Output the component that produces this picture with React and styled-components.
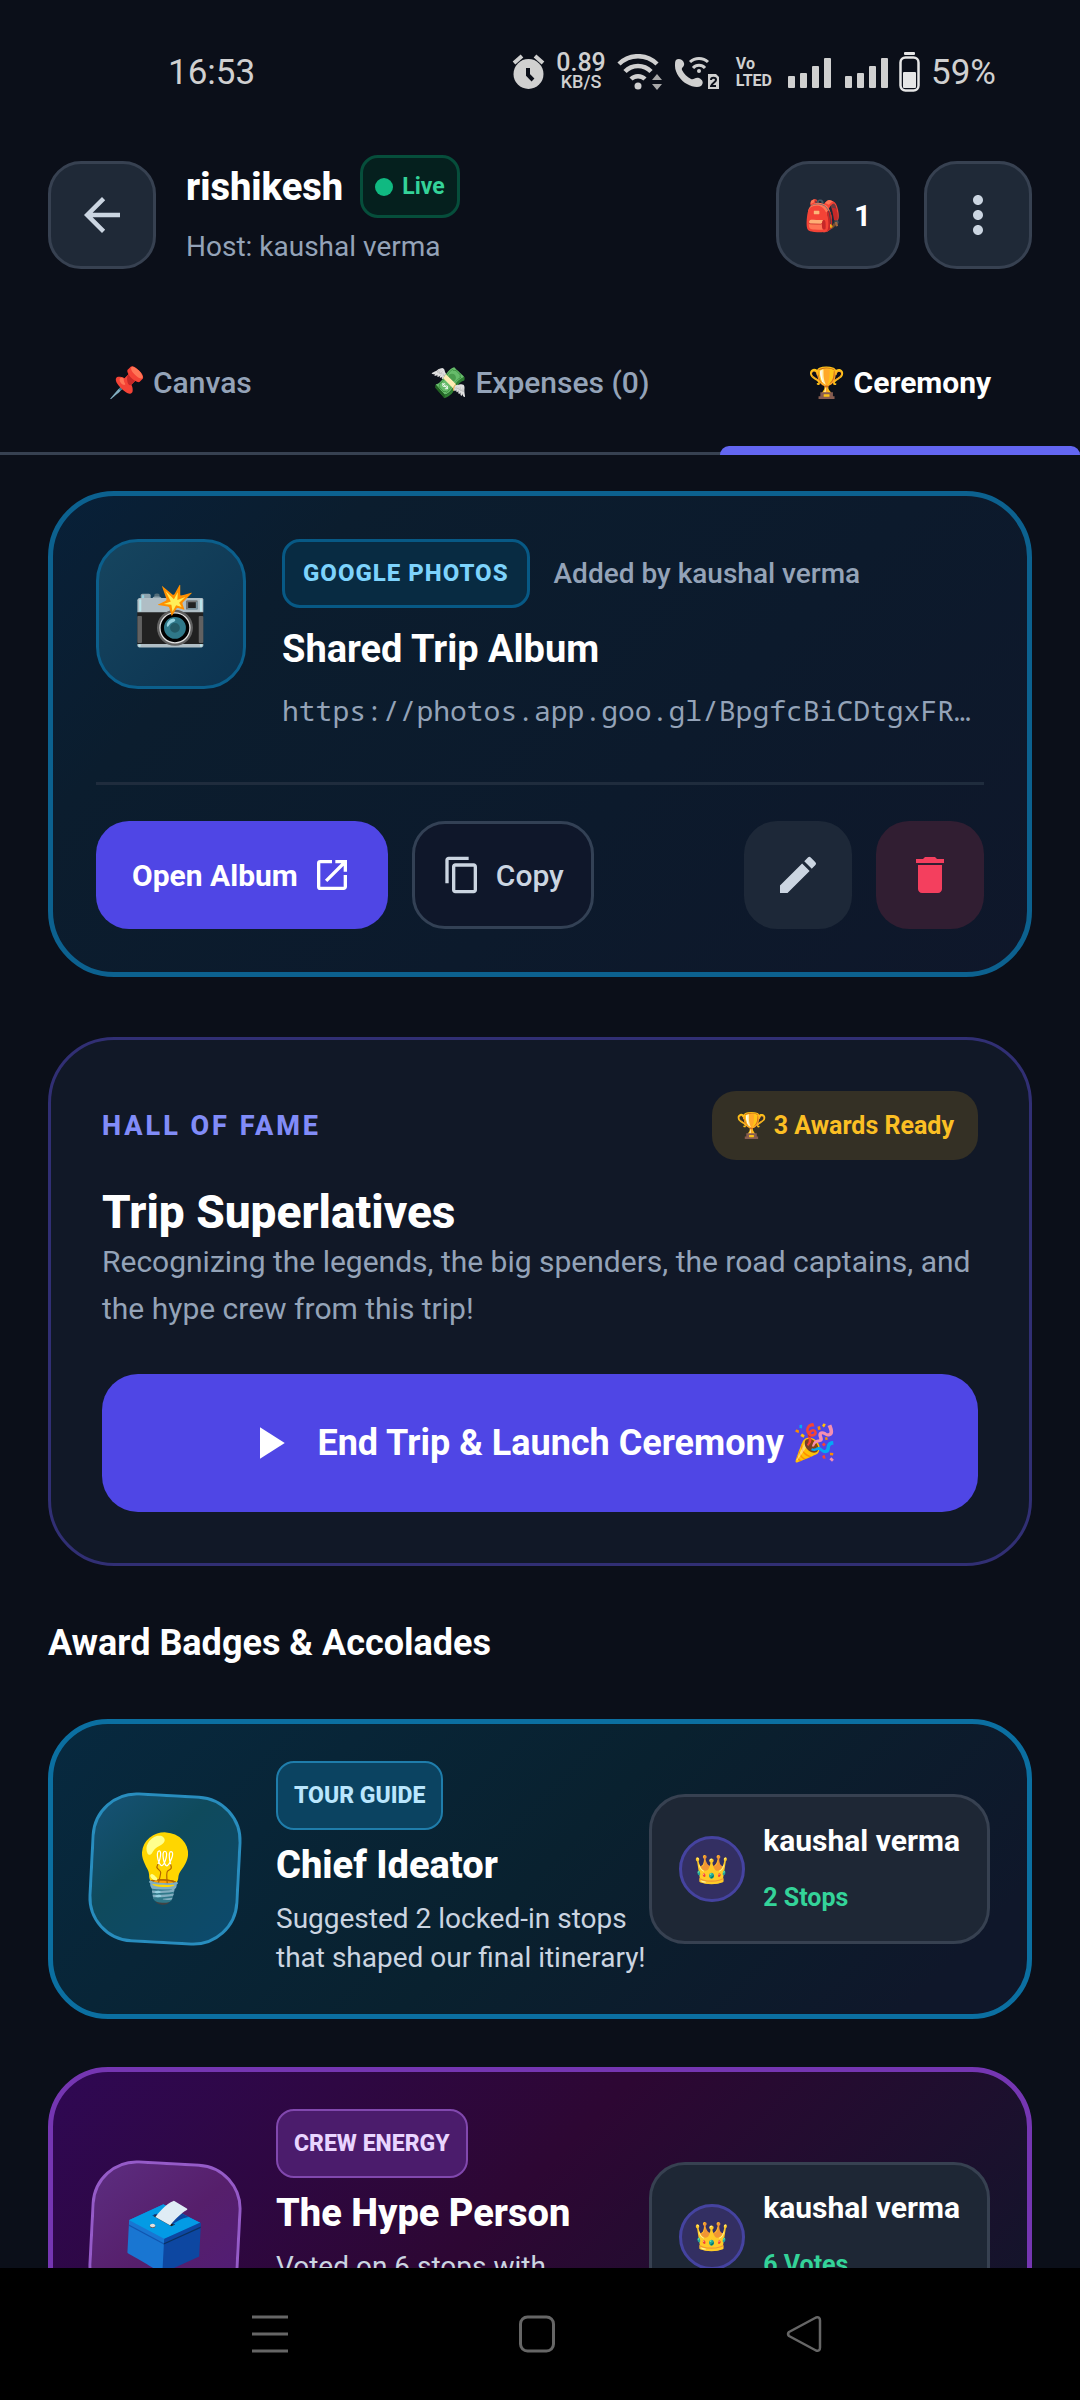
import React from 'react'
import styled, { createGlobalStyle, css } from 'styled-components'
import {
  MdArrowBack,
  MdContentCopy,
  MdDelete,
  MdEdit,
  MdMoreVert,
  MdOpenInNew,
  MdPlayArrow,
} from 'react-icons/md'

const COLORS = {
  BG: '#0b0f19',
  SURFACE: '#1f2937',
  BORDER: '#374151',
  MUTED: '#94a3b8',
  LIGHT: '#cbd5e1',
  PRIMARY: '#4f46e5',
  STATUS: '#d0d0d0',
  NAV: '#666666',
}

const GlobalStyle = createGlobalStyle`
  * {
    box-sizing: border-box;
  }
  body {
    margin: 0;
    background: ${COLORS.BG};
    font-family: Roboto, 'Noto Color Emoji', sans-serif;
    color: white;
  }
  button {
    font: inherit;
    color: inherit;
    border: 0;
    padding: 0;
    background: none;
  }
  h1, h2, h3, p {
    margin: 0;
  }
  svg {
    display: block;
    flex: none;
  }
`

const Screen = styled.div`
  display: flex;
  flex-direction: column;
  height: 100vh;
`

/* status bar */

const StatusBar = styled.div`
  display: flex;
  align-items: center;
  justify-content: space-between;
  flex: none;
  height: 144px;
  padding: 0 84px 0 168px;
  color: ${COLORS.STATUS};
  font-size: 35px;
`
const StatusIcons = styled.div`
  display: flex;
  align-items: center;
  gap: 11px;
`
const Speed = styled.div`
  display: flex;
  flex-direction: column;
  align-items: center;
  font-size: 25px;
  font-weight: 500;
  line-height: 20px;
`
const SpeedUnit = styled.span`
  font-size: 18px;
  line-height: 18px;
`
const VoLte = styled.div`
  display: flex;
  flex-direction: column;
  margin: 0 5px;
  font-size: 16px;
  font-weight: 700;
  line-height: 17px;
`
const Signals = styled.div`
  display: flex;
  gap: 14px;
`

/* header */

const Header = styled.header`
  display: flex;
  align-items: center;
  flex: none;
  padding: 11px 48px 34px;
`
const SquareButton = styled.button`
  display: flex;
  align-items: center;
  justify-content: center;
  gap: 12px;
  width: ${({ $wide }) => ($wide ? 124 : 108)}px;
  height: 108px;
  border: 3px solid ${COLORS.BORDER};
  border-radius: 33px;
  background: ${COLORS.SURFACE};
  color: ${({ $wide }) => ($wide ? 'white' : COLORS.LIGHT)};
  font-size: 30px;
  font-weight: 700;
`
const HeaderText = styled.div`
  flex: 1;
  padding: 0 0 9px 30px;
`
const HeaderActions = styled.div`
  display: flex;
  gap: 24px;
`
const TripRow = styled.div`
  display: flex;
  align-items: center;
  gap: 17px;
  height: 63px;
  margin-bottom: 9px;
`
const TripName = styled.h1`
  font-size: 38px;
  font-weight: 800;
`
const LiveBadge = styled.div`
  display: flex;
  align-items: center;
  gap: 9px;
  height: 63px;
  padding: 0 12px;
  border: 3px solid #064e3b;
  border-radius: 18px;
  background: #05201e;
  color: #34d399;
  font-size: 23px;
  font-weight: 700;
`
const LiveDot = styled.span`
  width: 18px;
  height: 18px;
  border-radius: 50%;
  background: #10b981;
`
const Host = styled.div`
  color: ${COLORS.MUTED};
  font-size: 28px;
  line-height: 39px;
`

/* tabs */

const Tabs = styled.nav`
  display: flex;
  flex: none;
`
const Tab = styled.button`
  position: relative;
  flex: 1;
  height: 146px;
  padding-top: 4px;
  border-bottom: 3px solid ${COLORS.BORDER};
  color: ${COLORS.MUTED};
  font-size: 30px;
  font-weight: 500;

  ${({ $active }) =>
    $active &&
    css`
      color: white;
      font-weight: 700;

      &::after {
        content: '';
        position: absolute;
        left: 0;
        right: 0;
        bottom: -3px;
        height: 9px;
        border-radius: 9px 9px 0 0;
        background: #6366f1;
      }
    `}
`

/* content */

const Content = styled.main`
  flex: 1;
  min-height: 0;
  overflow: hidden;
  padding: 36px 48px 0;
`

const AlbumCard = styled.section`
  padding: 43px;
  margin-bottom: 60px;
  border: 5px solid #0c618f;
  border-radius: 66px;
  background: linear-gradient(135deg, #082038 0%, #0b1d2e 22%, #0c1a2c 60%, #0f172a 100%);
`
const AlbumTop = styled.div`
  display: flex;
  gap: 36px;
  padding-bottom: 54px;
  border-bottom: 3px solid #1f2c3d;
`
const AlbumIcon = styled.div`
  display: flex;
  align-items: center;
  justify-content: center;
  flex: none;
  width: 150px;
  height: 150px;
  border: 3px solid #0b5f8c;
  border-radius: 42px;
  background: linear-gradient(135deg, #16455f, #0c3350);
  font-size: 60px;
`
const AlbumInfo = styled.div`
  flex: 1;
  min-width: 0;
`
const AlbumMeta = styled.div`
  display: flex;
  align-items: center;
  gap: 24px;
  margin-bottom: 17px;
  color: ${COLORS.MUTED};
  font-size: 28px;
  font-weight: 500;
`
const SourceChip = styled.span`
  height: 69px;
  padding: 0 18px;
  border: 3px solid #075985;
  border-radius: 18px;
  background: #082b42;
  color: #7dd3fc;
  font-size: 24px;
  font-weight: 800;
  line-height: 63px;
  letter-spacing: 1px;
`
const AlbumTitle = styled.h2`
  margin-bottom: 19px;
  font-size: 38px;
  font-weight: 700;
  line-height: 48px;
`
const AlbumUrl = styled.div`
  overflow: hidden;
  color: ${COLORS.MUTED};
  font-family: 'Noto Sans Mono', 'DejaVu Sans Mono', monospace;
  font-size: 28px;
  line-height: 36px;
  white-space: nowrap;
  text-overflow: ellipsis;
`
const AlbumActions = styled.div`
  display: flex;
  gap: 24px;
  padding-top: 36px;
`
const ActionButton = styled.button`
  display: flex;
  align-items: center;
  justify-content: center;
  gap: 14px;
  height: 108px;
  padding: 0 ${({ $outlined }) => ($outlined ? 27 : 36)}px;
  border: ${({ $outlined }) => ($outlined ? '3px solid #334155' : 0)};
  border-radius: 33px;
  background: ${({ $outlined }) => ($outlined ? '#0f172a' : COLORS.PRIMARY)};
  color: ${({ $outlined }) => ($outlined ? COLORS.LIGHT : 'white')};
  font-size: 30px;
  font-weight: ${({ $outlined }) => ($outlined ? 500 : 700)};
`
const IconButton = styled.button`
  display: flex;
  align-items: center;
  justify-content: center;
  width: 108px;
  height: 108px;
  border-radius: 33px;
  background: ${({ $danger }) => ($danger ? '#311e32' : '#1d2838')};
  color: ${({ $danger }) => ($danger ? '#f43f5e' : COLORS.LIGHT)};
`
const Spacer = styled.div`
  flex: 1;
`

const FameCard = styled.section`
  padding: 51px;
  border: 3px solid #312f74;
  border-radius: 66px;
  background: #111827;
`
const FameHead = styled.div`
  display: flex;
  align-items: center;
  justify-content: space-between;
  margin-bottom: 26px;
`
const FameLabel = styled.div`
  color: #818cf8;
  font-size: 27px;
  font-weight: 800;
  letter-spacing: 3px;
`
const ReadyPill = styled.div`
  height: 69px;
  padding: 0 24px;
  border-radius: 24px;
  background: #343025;
  color: #fbbf24;
  font-size: 25px;
  font-weight: 700;
  line-height: 69px;
`
const FameTitle = styled.h2`
  font-size: 46px;
  font-weight: 800;
  line-height: 52px;
`
const FameText = styled.p`
  color: ${COLORS.MUTED};
  font-size: 30px;
  line-height: 47px;
`
const LaunchButton = styled.button`
  display: flex;
  align-items: center;
  justify-content: center;
  gap: 21px;
  width: 100%;
  height: 138px;
  margin-top: 42px;
  border-radius: 36px;
  background: ${COLORS.PRIMARY};
  font-size: 36px;
  font-weight: 700;
`

const SectionTitle = styled.h2`
  margin: 53px 0 52px;
  font-size: 36px;
  font-weight: 700;
  line-height: 48px;
`

/* awards */

const AwardCard = styled.article`
  display: flex;
  align-items: center;
  padding: 37px;
  margin-bottom: 48px;
  border: 5px solid ${({ $tone }) => $tone.border};
  border-radius: 60px;
  background: ${({ $tone }) => $tone.background};
`
const AwardBadge = styled.div`
  display: flex;
  align-items: center;
  justify-content: center;
  flex: none;
  width: 150px;
  height: 150px;
  margin-right: 36px;
  border: 3px solid ${({ $tone }) => $tone.badgeBorder};
  border-radius: 45px;
  background: ${({ $tone }) => $tone.badge};
  font-size: 66px;
  transform: rotate(3deg);
`
const AwardInfo = styled.div`
  flex: 1;
  min-width: 0;
`
const AwardTag = styled.div`
  width: fit-content;
  height: 69px;
  padding: 0 16px;
  border: 2px solid ${({ $tone }) => $tone.tagBorder};
  border-radius: 18px;
  background: ${({ $tone }) => $tone.tag};
  color: ${({ $tone }) => $tone.tagText};
  font-size: 23px;
  font-weight: 800;
  line-height: 65px;
`
const AwardTitle = styled.h3`
  margin: 11px 0 10px;
  font-size: 38px;
  font-weight: 800;
  line-height: 48px;
`
const AwardText = styled.p`
  color: ${COLORS.LIGHT};
  font-size: 28px;
  line-height: 39px;
`
const Winner = styled.div`
  display: flex;
  align-items: center;
  flex: none;
  gap: 18px;
  height: 150px;
  padding: 0 27px;
  border: 3px solid ${COLORS.BORDER};
  border-radius: 36px;
  background: #1e2735;
`
const Crown = styled.div`
  display: flex;
  align-items: center;
  justify-content: center;
  width: 66px;
  height: 66px;
  border: 3px solid #4543a0;
  border-radius: 50%;
  background: #332f62;
  font-size: 28px;
`
const WinnerName = styled.div`
  margin-bottom: 9px;
  font-size: 30px;
  font-weight: 700;
  line-height: 48px;
`
const WinnerScore = styled.div`
  color: #34d399;
  font-size: 25px;
  font-weight: 700;
  line-height: 48px;
`

/* system navigation */

const SystemNav = styled.footer`
  display: flex;
  align-items: center;
  justify-content: center;
  flex: none;
  gap: 231px;
  height: 132px;
  padding-right: 6px;
  background: black;
  color: ${COLORS.NAV};
`

const AlarmIcon = () => (
  <svg width="33" height="36" viewBox="0 0 33 36">
    <path d="M2 9l8-7M31 9l-8-7" stroke="currentColor" strokeWidth="4" />
    <circle cx="16.500" cy="20" r="15" fill="currentColor" />
    <path d="M16 14v7l5 5" fill="none" stroke={COLORS.BG} strokeWidth="4" />
  </svg>
)

const WifiIcon = () => (
  <svg width="46" height="36" viewBox="0 0 46 36" fill="none" stroke="currentColor">
    <path d="M2 10a27 27 0 0 1 38 0" strokeWidth="4.500" />
    <path d="M8 17.500a18 18 0 0 1 26 0" strokeWidth="4.500" />
    <path d="M14 25a10 10 0 0 1 14 0" strokeWidth="4.500" />
    <circle cx="21" cy="32" r="3.500" fill="currentColor" stroke="none" />
    <path d="M35 26l5-6 5 6zM35 30l5 6 5-6z" fill="#a8a8a8" stroke="none" />
  </svg>
)

const CallIcon = () => (
  <svg width="46" height="33" viewBox="0 0 46 33" fill="none" stroke="currentColor">
    <path
      d="M2 4C4 2 9 3 10 7c1 4-3 4-2 7 2 4 5 7 9 9 3 1 4-2 8-1 4 2 5 5 2 8-3 2-9 1-14-2C7 25 1 17 1 10c0-3 0-5 1-6z"
      fill="currentColor"
      stroke="none"
    />
    <path d="M16 6a13 13 0 0 1 18 0" strokeWidth="3" />
    <path d="M19 12a8 8 0 0 1 12 0" strokeWidth="3" />
    <circle cx="25" cy="15" r="2" fill="currentColor" stroke="none" />
    <path d="M34 18h8l3 3v12H34z" fill="currentColor" stroke="none" />
    <path d="M37 24c0-3 5-3 5 0 0 2-5 4-5 6h5" stroke={COLORS.BG} strokeWidth="2" />
  </svg>
)

const SignalIcon = () => (
  <svg width="43" height="31" viewBox="0 0 43 31" fill="currentColor">
    <rect y="19" width="7" height="12" rx="1" />
    <rect x="12" y="16" width="7" height="15" rx="1" />
    <rect x="24" y="9" width="7" height="22" rx="1" />
    <rect x="36" y="1" width="7" height="30" rx="1" />
  </svg>
)

const BatteryIcon = () => (
  <svg width="21" height="40" viewBox="0 0 21 40" fill="none">
    <rect x="5" width="11" height="3" rx="1" fill="#e6e6e6" />
    <rect x="1.500" y="5.500" width="18" height="33" rx="5" stroke="#e6e6e6" strokeWidth="2.500" />
    <rect x="4" y="20" width="13" height="16" rx="1" fill="#e6e6e6" />
  </svg>
)

const RecentsIcon = () => (
  <svg width="36" height="38" viewBox="0 0 36 38" stroke="currentColor" strokeWidth="3">
    <path d="M0 2h36M0 19h36M0 36h36" />
  </svg>
)

const HomeIcon = () => (
  <svg width="36" height="38" viewBox="0 0 36 38" fill="none">
    <rect x="1.500" y="2" width="33" height="34" rx="7" stroke="currentColor" strokeWidth="3" />
  </svg>
)

const BackIcon = () => (
  <svg width="36" height="38" viewBox="0 0 36 38" fill="none">
    <path
      d="M3 17L30 2.500q4-1 4 3v27q0 4-4 3L3 21q-2-2 0-4z"
      stroke="currentColor"
      strokeWidth="2.500"
      strokeLinejoin="round"
    />
  </svg>
)

const BLUE_TONE = {
  border: '#0b6fa1',
  background: 'linear-gradient(135deg, #07293f 0%, #09212f 50%, #0f172a 90%)',
  badgeBorder: '#288dbe',
  badge: 'linear-gradient(135deg, #165275 0%, #0f4a5c 40%, #0c4a6e 100%)',
  tagBorder: '#1f7dab',
  tag: '#0b4361',
  tagText: '#bae6fd',
}

const PURPLE_TONE = {
  border: '#7536b2',
  background: 'linear-gradient(135deg, #2f0853 0%, #2d0733 45%, #14142b 90%)',
  badgeBorder: '#955bc8',
  badge: 'linear-gradient(135deg, #5c2d80 0%, #561f6b 50%, #501c77 100%)',
  tagBorder: '#8148ae',
  tag: '#4b1c6c',
  tagText: '#e9d5ff',
}

const AWARDS = [
  {
    tone: BLUE_TONE,
    icon: '💡',
    tag: 'TOUR GUIDE',
    title: 'Chief Ideator',
    text: 'Suggested 2 locked-in stops that shaped our final itinerary!',
    winner: 'kaushal verma',
    score: '2 Stops',
  },
  {
    tone: PURPLE_TONE,
    icon: '🗳️',
    tag: 'CREW ENERGY',
    title: 'The Hype Person',
    text: 'Voted on 6 stops with unmatched enthusiasm and energy for the crew!',
    winner: 'kaushal verma',
    score: '6 Votes',
  },
]

const Award = ({ award }) => {
  const { tone, icon, tag, title, text, winner, score } = award

  return (
    <AwardCard $tone={tone}>
      <AwardBadge $tone={tone}>{icon}</AwardBadge>
      <AwardInfo>
        <AwardTag $tone={tone}>{tag}</AwardTag>
        <AwardTitle>{title}</AwardTitle>
        <AwardText>{text}</AwardText>
      </AwardInfo>
      <Winner>
        <Crown>👑</Crown>
        <div>
          <WinnerName>{winner}</WinnerName>
          <WinnerScore>{score}</WinnerScore>
        </div>
      </Winner>
    </AwardCard>
  )
}

const App = () => (
  <Screen>
    <GlobalStyle />
    <StatusBar>
      <span>16:53</span>
      <StatusIcons>
        <AlarmIcon />
        <Speed>
          <span>0.89</span>
          <SpeedUnit>KB/S</SpeedUnit>
        </Speed>
        <WifiIcon />
        <CallIcon />
        <VoLte>
          <span>Vo</span>
          <span>LTED</span>
        </VoLte>
        <Signals>
          <SignalIcon />
          <SignalIcon />
        </Signals>
        <BatteryIcon />
        <span>59%</span>
      </StatusIcons>
    </StatusBar>

    <Header>
      <SquareButton aria-label="Back">
        <MdArrowBack size={54} />
      </SquareButton>
      <HeaderText>
        <TripRow>
          <TripName>rishikesh</TripName>
          <LiveBadge>
            <LiveDot />
            Live
          </LiveBadge>
        </TripRow>
        <Host>Host: kaushal verma</Host>
      </HeaderText>
      <HeaderActions>
        <SquareButton $wide>
          <span>🎒</span>
          <span>1</span>
        </SquareButton>
        <SquareButton aria-label="More">
          <MdMoreVert size={60} />
        </SquareButton>
      </HeaderActions>
    </Header>

    <Tabs>
      <Tab>📌 Canvas</Tab>
      <Tab>💸 Expenses (0)</Tab>
      <Tab $active>🏆 Ceremony</Tab>
    </Tabs>

    <Content>
      <AlbumCard>
        <AlbumTop>
          <AlbumIcon>📸</AlbumIcon>
          <AlbumInfo>
            <AlbumMeta>
              <SourceChip>GOOGLE PHOTOS</SourceChip>
              <span>Added by kaushal verma</span>
            </AlbumMeta>
            <AlbumTitle>Shared Trip Album</AlbumTitle>
            <AlbumUrl>https://photos.app.goo.gl/BpgfcBiCDtgxFR…</AlbumUrl>
          </AlbumInfo>
        </AlbumTop>
        <AlbumActions>
          <ActionButton>
            Open Album
            <MdOpenInNew size={40} />
          </ActionButton>
          <ActionButton $outlined>
            <MdContentCopy size={40} />
            Copy
          </ActionButton>
          <Spacer />
          <IconButton aria-label="Edit">
            <MdEdit size={48} />
          </IconButton>
          <IconButton $danger aria-label="Delete">
            <MdDelete size={48} />
          </IconButton>
        </AlbumActions>
      </AlbumCard>

      <FameCard>
        <FameHead>
          <FameLabel>HALL OF FAME</FameLabel>
          <ReadyPill>🏆 3 Awards Ready</ReadyPill>
        </FameHead>
        <FameTitle>Trip Superlatives</FameTitle>
        <FameText>
          Recognizing the legends, the big spenders, the road captains, and the hype crew from
          this trip!
        </FameText>
        <LaunchButton>
          <MdPlayArrow size={54} />
          End Trip &amp; Launch Ceremony 🎉
        </LaunchButton>
      </FameCard>

      <SectionTitle>Award Badges &amp; Accolades</SectionTitle>
      {AWARDS.map(award => (
        <Award key={award.title} award={award} />
      ))}
    </Content>

    <SystemNav>
      <RecentsIcon />
      <HomeIcon />
      <BackIcon />
    </SystemNav>
  </Screen>
)

export default App
